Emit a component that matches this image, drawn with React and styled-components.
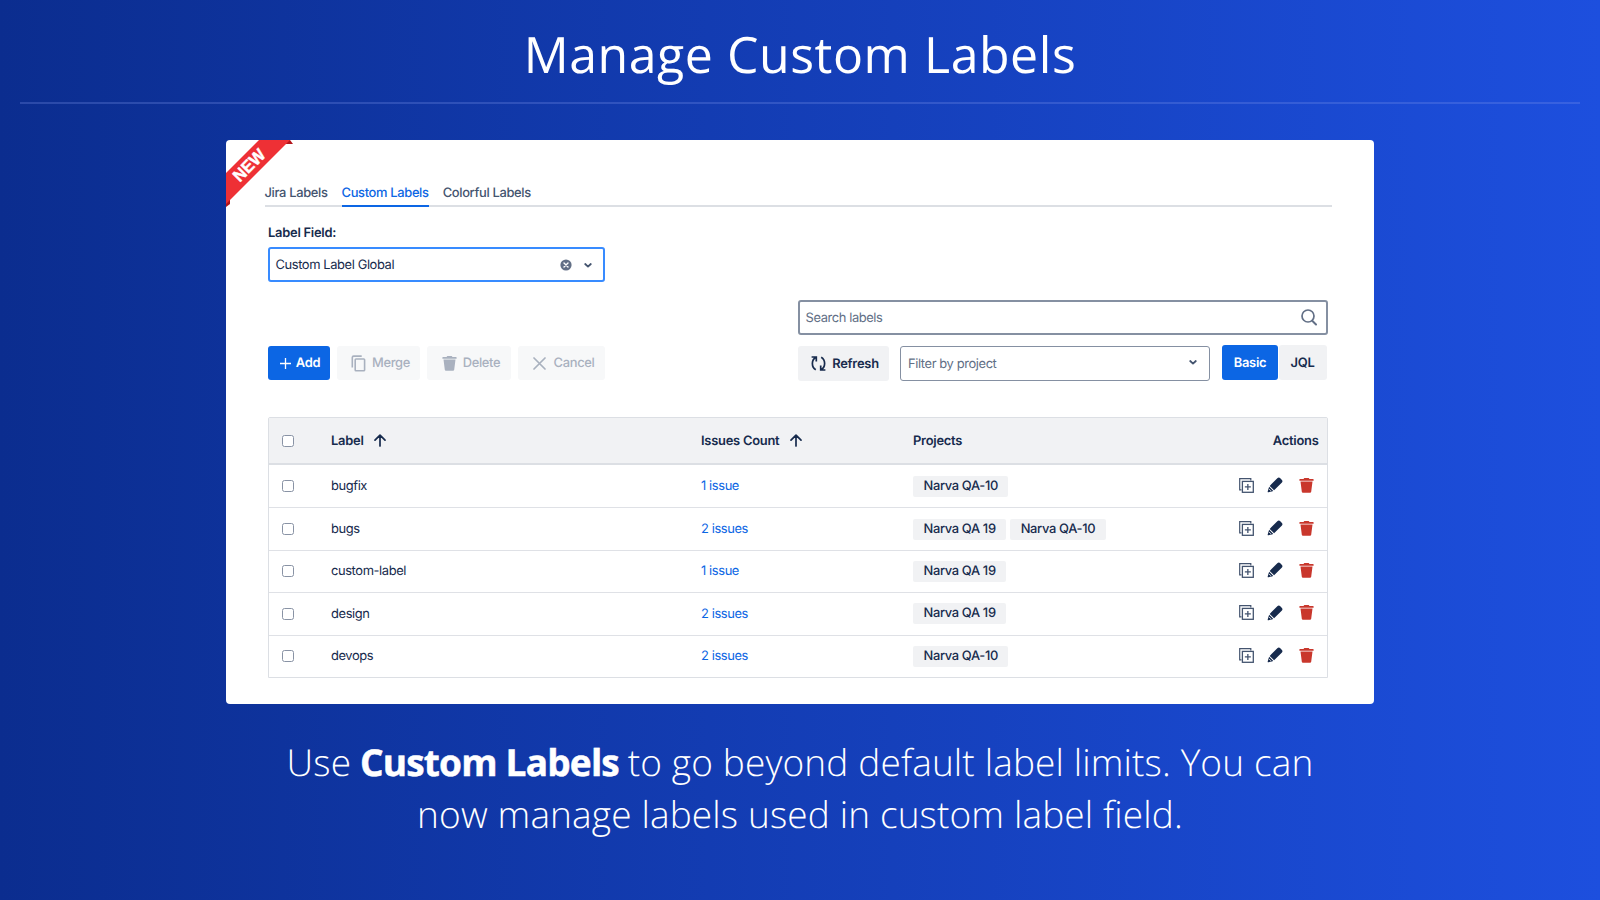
import React from "react";
import styled, { createGlobalStyle, css } from "styled-components";

const GlobalStyle = createGlobalStyle`
  * {
    box-sizing: border-box;
  }
  body {
    margin: 0;
    font-family: Inter, sans-serif;
    font-size: 12.92px;
    letter-spacing: -0.4px;
    text-rendering: geometricPrecision;
    color: #172b4d;
  }
`;

const medium = css`
  font-weight: 500;
  letter-spacing: -0.34px;
`;

const semibold = css`
  font-weight: 600;
  letter-spacing: -0.25px;
`;

const Slide = styled.div`
  width: 1600px;
  height: 900px;
  overflow: hidden;
  display: flex;
  flex-direction: column;
  align-items: center;
  background: linear-gradient(90deg, #0b2d8f 0%, #1d4fde 100%);
`;

const SlideHeader = styled.header`
  width: 1560px;
  height: 104px;
  flex-shrink: 0;
  border-bottom: 2px solid rgba(130, 150, 235, 0.27);
  text-align: center;
`;

const Title = styled.h1`
  margin: 0;
  padding-top: 19px;
  font-family: "Open Sans", sans-serif;
  font-weight: 400;
  font-size: 50px;
  line-height: 70px;
  letter-spacing: 0.55px;
  color: white;
`;

const Card = styled.main`
  position: relative;
  width: 1148px;
  height: 564px;
  margin-top: 36px;
  flex-shrink: 0;
  padding: 40px 42px 0;
  border-radius: 4px;
  overflow: hidden;
  background-color: white;
`;

const Ribbon = styled.svg`
  position: absolute;
  top: 0;
  left: 0;
  font-weight: 700;
`;

const Tabs = styled.nav`
  display: flex;
  column-gap: 14px;
  height: 27px;
  margin: 0 0 0 -3.5px;
  width: 1067px;
  border-bottom: 2px solid #dcdfe4;
`;

const Tab = styled.span`
  ${medium}
  height: 27px;
  line-height: 26px;
  white-space: nowrap;
  color: ${(props) => (props.$active ? "#0c66e4" : "#44546f")};
  ${(props) =>
    props.$active &&
    css`
      border-bottom: 2px solid #0c66e4;
    `};
`;

const FieldLabel = styled.div`
  ${semibold}
  margin-top: 18px;
  height: 16px;
  line-height: 16px;
`;

const Field = styled.div`
  display: flex;
  align-items: center;
  width: ${(props) => props.$width};
  height: 35px;
  padding: 0 ${(props) => props.$padRight || "11px"} 0 5.5px;
  border: ${(props) => props.$border};
  border-radius: 3px;
  color: ${(props) => (props.$filled ? "#172b4d" : "#626f86")};
  svg {
    flex-shrink: 0;
  }
`;

const FieldText = styled.span`
  flex: 1;
`;

const LabelField = styled(Field)`
  margin-top: 6px;
  height: 35px;
  column-gap: 11px;
`;

const FilterField = styled(Field)`
  margin: 1px 1.5px 0 0;
  padding-left: 7px;
  svg {
    margin-bottom: 3px;
  }
`;

const SearchRow = styled.div`
  display: flex;
  justify-content: flex-end;
  width: 1060px;
  margin-top: 18px;
`;

const Toolbar = styled.div`
  display: flex;
  justify-content: space-between;
  width: 1058.5px;
  margin-top: 10px;
`;

const ButtonGroup = styled.div`
  display: flex;
  column-gap: ${(props) => props.$gap};
  padding-top: ${(props) => props.$top || 0};
`;

const Button = styled.button`
  display: flex;
  align-items: center;
  justify-content: center;
  column-gap: ${(props) => props.$gap || "6px"};
  width: ${(props) => props.$width};
  height: ${(props) => props.$height || "35px"};
  padding: 0 0 0 ${(props) => props.$padLeft || 0};
  border: none;
  border-radius: 3px;
  font-family: inherit;
  font-size: inherit;
  text-rendering: inherit;
  ${(props) => (props.disabled ? medium : semibold)};
  background-color: #f1f2f4;
  color: #172b4d;
  ${(props) =>
    props.$primary &&
    css`
      background-color: #0c66e4;
      color: white;
    `};
  ${(props) =>
    props.disabled &&
    css`
      background-color: #f7f8f9;
      color: #a9b1bf;
    `};
`;

const RefreshButton = styled(Button)`
  margin-top: 1px;
`;

const Table = styled.div`
  width: 1060px;
  margin-top: 36px;
  border: 1px solid #dcdfe4;
  border-radius: 2px 2px 0 0;
`;

const Row = styled.div`
  display: grid;
  grid-template-columns: 62px 370px 212px 1fr 112px;
  align-items: center;
  height: 42.4px;
  border-top: 1px solid #dfe1e6;
  &:nth-child(2) {
    border-top: none;
  }
`;

const HeadRow = styled(Row)`
  ${semibold}
  height: 47px;
  border-top: none;
  border-bottom: 2px solid #dcdfe4;
  background-color: #f1f2f4;
`;

const Cell = styled.div`
  display: flex;
  align-items: center;
  column-gap: ${(props) => props.$gap || "4px"};
  justify-content: ${(props) => (props.$end ? "flex-end" : "flex-start")};
  padding-right: ${(props) => (props.$end ? "8.5px" : 0)};
`;

const Checkbox = styled.span`
  width: 12px;
  height: 12px;
  margin-left: 13px;
  border: 1px solid #8993a5;
  border-radius: 2.5px;
  background-color: white;
`;

const IssueLink = styled.a`
  color: #0c66e4;
`;

const Tag = styled.span`
  ${medium}
  height: 21px;
  line-height: 21px;
  padding: 0 10.5px;
  border-radius: 2px;
  background-color: #f1f2f4;
`;

const Actions = styled.div`
  display: flex;
  align-items: center;
  padding: 0 0 2px 23.5px;
  svg:nth-child(2) {
    margin-left: 13px;
  }
  svg:nth-child(3) {
    margin-left: 16.5px;
  }
`;

const Caption = styled.p`
  margin: 32px 0 0;
  font-family: "Open Sans", sans-serif;
  font-weight: 300;
  font-size: 37px;
  line-height: 52px;
  letter-spacing: 0.14px;
  text-align: center;
  color: white;
  span {
    display: block;
    white-space: nowrap;
  }
  b {
    margin: 0 -1px;
    font-weight: 700;
    letter-spacing: -0.8px;
    -webkit-text-stroke: 0.5px white;
  }
`;

const NewRibbon = () => (
  <Ribbon width="70" height="70" viewBox="0 0 70 70">
    <path d="M60 0h4l3 4h-8zM0 60v7l4-3v-6z" fill="#b3151b" />
    <path d="M33 0h31L0 64V33z" fill="#ee3035" />
    <text
      x="23"
      y="31"
      fill="white"
      stroke="white"
      strokeWidth="0.4"
      fontSize="17"
      letterSpacing="0"
      fontFamily="Liberation Sans, sans-serif"
      textAnchor="middle"
      textLength="38"
      lengthAdjust="spacingAndGlyphs"
      transform="rotate(-45 23 25)"
    >
      NEW
    </text>
  </Ribbon>
);

const ChevronIcon = () => (
  <svg width="10" height="10" viewBox="0 0 10 10">
    <path d="M2.2 4l2.8 2.6L7.8 4" fill="none" stroke="#44546f" strokeWidth="1.8" strokeLinecap="round" strokeLinejoin="round" />
  </svg>
);

const ClearIcon = () => (
  <svg width="12" height="12" viewBox="0 0 12 12">
    <circle cx="6" cy="6" r="5.6" fill="#626f86" />
    <path d="M4 4l4 4M8 4L4 8" stroke="white" strokeWidth="1.4" strokeLinecap="round" />
  </svg>
);

const SearchIcon = () => (
  <svg width="16" height="17" viewBox="0 0 16 17">
    <circle cx="7" cy="7" r="6" fill="none" stroke="#626f86" strokeWidth="1.7" />
    <path d="M11.2 11.8l3.8 3.7" stroke="#626f86" strokeWidth="2" strokeLinecap="round" />
  </svg>
);

const PlusIcon = () => (
  <svg width="11" height="11" viewBox="0 0 11 11">
    <path d="M5.5 0v11M0 5.5h11" stroke="white" strokeWidth="1.3" />
  </svg>
);

const MergeIcon = () => (
  <svg width="15" height="17" viewBox="0 0 15 17" fill="none" stroke="#a9b1bf" strokeWidth="1.6">
    <path d="M1.3 12.5V2.5a1.4 1.4 0 0 1 1.4-1.4h8" />
    <rect x="4.2" y="4" width="9.4" height="11.7" rx="0.8" />
  </svg>
);

const TrashIcon = ({ color }) => (
  <svg width="15" height="15" viewBox="0 0 15 15" fill={color}>
    <path d="M.9 1h3.6L5.3.1h4.4l.8.9h3.6a.5.5 0 0 1 .5.5v1.3H.4V1.5A.5.5 0 0 1 .9 1z" />
    <path d="M1.5 3.5h12l-1.3 10.2a1.2 1.2 0 0 1-1.2 1.1H4a1.2 1.2 0 0 1-1.2-1.1z" />
  </svg>
);

const CrossIcon = () => (
  <svg width="13" height="13" viewBox="0 0 13 13">
    <path d="M1 1l11 11M12 1L1 12" stroke="#a9b1bf" strokeWidth="1.7" strokeLinecap="round" />
  </svg>
);

const RefreshIcon = () => (
  <svg width="15" height="15" viewBox="0 0 15 15" fill="none" stroke="#172b4d" strokeWidth="1.7">
    <path d="M.6 1h4.7v4.5M5 1.2C.2 3.8.2 11 4.8 13.8" />
    <path d="M14.4 14H9.7V9.5M10 13.8C14.8 11.2 14.8 4 10.2 1.2" />
  </svg>
);

const SortIcon = () => (
  <svg width="12" height="13" viewBox="0 0 12 13">
    <path d="M6 12V1.3M1 6.2l5-5 5 5" fill="none" stroke="#172b4d" strokeWidth="1.7" strokeLinecap="round" strokeLinejoin="round" />
  </svg>
);

const CopyIcon = () => (
  <svg width="15" height="15" viewBox="0 0 15 15" fill="none" stroke="#44546f">
    <path d="M2.5 11.8H.7V.7h11.1v1.8" strokeWidth="1.2" />
    <rect x="3.4" y="3.4" width="10.9" height="10.9" strokeWidth="1.3" />
    <path d="M8.85 5.9v6M5.85 8.9h6" strokeWidth="1.3" />
  </svg>
);

const PencilIcon = () => (
  <svg width="16" height="16" viewBox="0 0 16 16" fill="#172b4d">
    <path d="M10.3 1.3a2.1 2.1 0 0 1 3 0l1.4 1.4a2.1 2.1 0 0 1 0 3l-7.6 7.6-4.4-4.4z" />
    <path d="M2.1 9.7l4.2 4.2-4.7 1.4a.7.7 0 0 1-.9-.9z" />
    <path d="M2.3 12.2l1.5 1.5" stroke="white" strokeWidth="1" />
  </svg>
);

const rows = [
  { label: "bugfix", count: "1 issue", projects: ["Narva QA-10"] },
  { label: "bugs", count: "2 issues", projects: ["Narva QA 19", "Narva QA-10"] },
  { label: "custom-label", count: "1 issue", projects: ["Narva QA 19"] },
  { label: "design", count: "2 issues", projects: ["Narva QA 19"] },
  { label: "devops", count: "2 issues", projects: ["Narva QA-10"] },
];

const LabelsTable = () => (
  <Table>
    <HeadRow>
      <Checkbox />
      <Cell $gap="10.5px">
        Label <SortIcon />
      </Cell>
      <Cell $gap="10.5px">
        Issues Count <SortIcon />
      </Cell>
      <Cell>Projects</Cell>
      <Cell $end>Actions</Cell>
    </HeadRow>
    {rows.map((row) => (
      <Row key={row.label}>
        <Checkbox />
        <Cell>{row.label}</Cell>
        <Cell>
          <IssueLink>{row.count}</IssueLink>
        </Cell>
        <Cell>
          {row.projects.map((project) => (
            <Tag key={project}>{project}</Tag>
          ))}
        </Cell>
        <Actions>
          <CopyIcon />
          <PencilIcon />
          <TrashIcon color="#c9372c" />
        </Actions>
      </Row>
    ))}
  </Table>
);

const App = () => {
  return (
    <>
      <GlobalStyle />
      <Slide>
        <SlideHeader>
          <Title>Manage Custom Labels</Title>
        </SlideHeader>
        <Card>
          <NewRibbon />
          <Tabs>
            <Tab>Jira Labels</Tab>
            <Tab $active>Custom Labels</Tab>
            <Tab>Colorful Labels</Tab>
          </Tabs>
          <FieldLabel>Label Field:</FieldLabel>
          <LabelField $width="337px" $border="2px solid #388bff" $padRight="10px" $filled>
            <FieldText>Custom Label Global</FieldText>
            <ClearIcon />
            <ChevronIcon />
          </LabelField>
          <SearchRow>
            <Field $width="530px" $border="2px solid #8590a2" $padRight="9px">
              <FieldText>Search labels</FieldText>
              <SearchIcon />
            </Field>
          </SearchRow>
          <Toolbar>
            <ButtonGroup $gap="7px" $top="1px">
              <Button $primary $width="62px" $height="34px" $gap="5px" $padLeft="2px">
                <PlusIcon /> Add
              </Button>
              <Button disabled $width="83px" $height="34px" $padLeft="4px">
                <MergeIcon /> Merge
              </Button>
              <Button disabled $width="84px" $height="34px" $padLeft="4px">
                <TrashIcon color="#a9b1bf" /> Delete
              </Button>
              <Button disabled $width="87px" $height="34px" $gap="8px" $padLeft="4px">
                <CrossIcon /> Cancel
              </Button>
            </ButtonGroup>
            <ButtonGroup $gap="11px">
              <RefreshButton $width="91px" $padLeft="3px">
                <RefreshIcon /> Refresh
              </RefreshButton>
              <FilterField $width="309.5px" $border="1px solid #8590a2">
                <FieldText>Filter by project</FieldText>
                <ChevronIcon />
              </FilterField>
              <ButtonGroup $gap="0.5px">
                <Button $primary $width="56px">
                  Basic
                </Button>
                <Button $width="48px">JQL</Button>
              </ButtonGroup>
            </ButtonGroup>
          </Toolbar>
          <LabelsTable />
        </Card>
        <Caption>
          <span>
            Use <b>Custom Labels</b> to go beyond default label limits. You can
          </span>
          <span>now manage labels used in custom label field.</span>
        </Caption>
      </Slide>
    </>
  );
};

export default App;
